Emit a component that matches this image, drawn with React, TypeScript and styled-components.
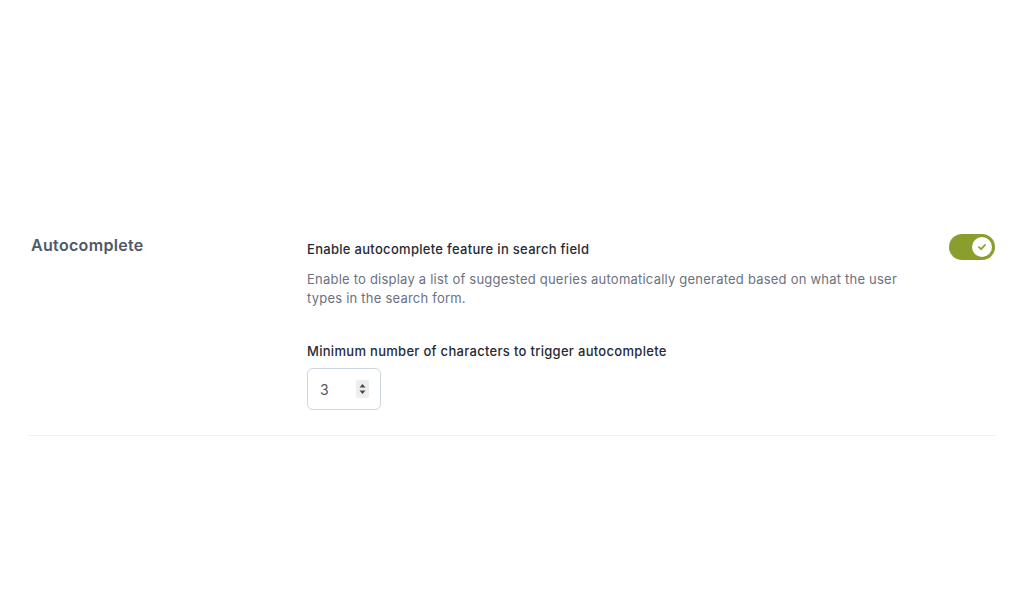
import React from "react";
import styled, { createGlobalStyle } from "styled-components";

const Global = createGlobalStyle`
  html, body { margin: 0; padding: 0; background: #ffffff; }
  body { font-family: Inter, "Noto Sans", sans-serif; -webkit-font-smoothing: antialiased; }
`;

const Page = styled.div`
  width: 1024px;
  height: 614px;
  box-sizing: border-box;
  padding: 232px 29px 0 29px;
`;

const Row = styled.section`
  display: flex;
  align-items: flex-start;
  padding-bottom: 25px;
  border-bottom: 1px solid #f1f1f2;
`;

const SideTitle = styled.h2`
  width: 276px;
  flex: none;
  margin: 0;
  padding: 1px 0 0 2px;
  font-size: 16px;
  line-height: 24px;
  font-weight: 600;
  letter-spacing: 0.32px;
  color: #4f5868;
`;

const Body = styled.div`
  flex: 1;
  max-width: 600px;
  display: flex;
  flex-direction: column;
`;

const Heading = styled.div`
  margin-top: 8px;
  font-size: 13px;
  line-height: 18px;
  font-weight: 500;
  letter-spacing: 0.3px;
  color: #252b36;
`;

const Desc = styled.p`
  margin: 12px 0 0;
  font-size: 13px;
  line-height: 19px;
  letter-spacing: 0.22px;
  color: #6b7180;
`;

const Label = styled.div`
  margin-top: 34px;
  font-size: 13px;
  line-height: 18px;
  font-weight: 500;
  letter-spacing: 0.3px;
  color: #252b36;
`;

const NumberBox = styled.div`
  margin-top: 8px;
  width: 74px;
  height: 42px;
  box-sizing: border-box;
  border: 1px solid #cdd5e0;
  border-radius: 6px;
  display: flex;
  align-items: center;
  justify-content: space-between;
  padding: 0 11px 0 12px;
  font-size: 14px;
  color: #505866;
`;

const Spinner = styled.div`
  width: 13px;
  height: 18px;
  background: #ededed;
  border-radius: 2px;
  display: flex;
  align-items: center;
  justify-content: center;
`;

const Right = styled.div`
  margin-left: auto;
  padding-top: 2px;
`;

const Toggle = styled.div<{ $on: boolean }>`
  position: relative;
  width: 46px;
  height: 26px;
  border-radius: 13px;
  background: ${(p) => (p.$on ? "#8a9e2d" : "#cbd5e1")};
`;

const Knob = styled.div`
  position: absolute;
  top: 3px;
  right: 3px;
  width: 20px;
  height: 20px;
  border-radius: 50%;
  background: #ffffff;
  display: flex;
  align-items: center;
  justify-content: center;
`;

export default function App() {
  return (
    <>
      <Global />
      <Page>
        <Row>
          <SideTitle>Autocomplete</SideTitle>
          <Body>
            <Heading>Enable autocomplete feature in search field</Heading>
            <Desc>
              Enable to display a list of suggested queries automatically generated based on what the user
              types in the search form.
            </Desc>
            <Label>Minimum number of characters to trigger autocomplete</Label>
            <NumberBox>
              <span>3</span>
              <Spinner>
                <svg width="7" height="12" viewBox="0 0 7 12">
                  <path d="M3.5 1 L6.5 4.5 H0.5 Z" fill="#4a4a4a" />
                  <path d="M3.5 11 L6.5 7.5 H0.5 Z" fill="#4a4a4a" />
                </svg>
              </Spinner>
            </NumberBox>
          </Body>
          <Right>
            <Toggle $on>
              <Knob>
                <svg width="10" height="10" viewBox="0 0 10 10">
                  <path d="M2 5.2 L4.1 7.2 L8 3" stroke="#8a9e2d" strokeWidth="1.8" fill="none" strokeLinecap="round" strokeLinejoin="round" />
                </svg>
              </Knob>
            </Toggle>
          </Right>
        </Row>
      </Page>
    </>
  );
}
